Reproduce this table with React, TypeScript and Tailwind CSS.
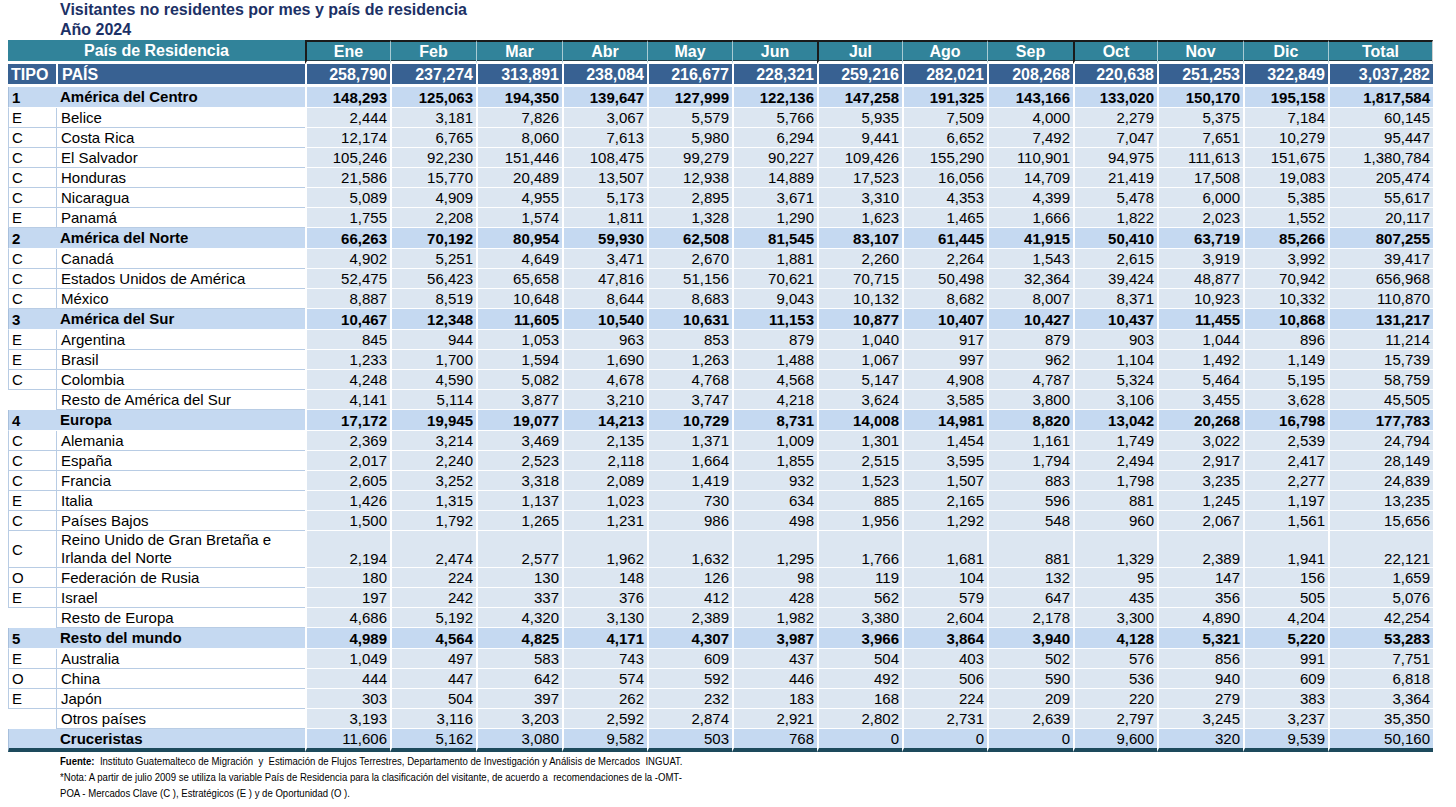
import React from 'react';

type RowKind = 'group' | 'item' | 'rest' | 'cruise';

interface Row {
  kind: RowKind;
  tipo: string;
  pais: string[];
  values: string;
  tall?: boolean;
}

const months = ['Ene', 'Feb', 'Mar', 'Abr', 'May', 'Jun', 'Jul', 'Ago', 'Sep', 'Oct', 'Nov', 'Dic', 'Total'];
const colWidths = [85, 86, 86, 85, 85, 85, 85, 85, 86, 84, 86, 85, 105];
// month columns that start with a dark rule in the header
const darkLeft = [0, 6, 9];

const totals = '258,790 237,274 313,891 238,084 216,677 228,321 259,216 282,021 208,268 220,638 251,253 322,849 3,037,282';

const rows: Row[] = [
  { kind: 'group', tipo: '1', pais: ['América del Centro'], values: '148,293 125,063 194,350 139,647 127,999 122,136 147,258 191,325 143,166 133,020 150,170 195,158 1,817,584' },
  { kind: 'item', tipo: 'E', pais: ['Belice'], values: '2,444 3,181 7,826 3,067 5,579 5,766 5,935 7,509 4,000 2,279 5,375 7,184 60,145' },
  { kind: 'item', tipo: 'C', pais: ['Costa Rica'], values: '12,174 6,765 8,060 7,613 5,980 6,294 9,441 6,652 7,492 7,047 7,651 10,279 95,447' },
  { kind: 'item', tipo: 'C', pais: ['El Salvador'], values: '105,246 92,230 151,446 108,475 99,279 90,227 109,426 155,290 110,901 94,975 111,613 151,675 1,380,784' },
  { kind: 'item', tipo: 'C', pais: ['Honduras'], values: '21,586 15,770 20,489 13,507 12,938 14,889 17,523 16,056 14,709 21,419 17,508 19,083 205,474' },
  { kind: 'item', tipo: 'C', pais: ['Nicaragua'], values: '5,089 4,909 4,955 5,173 2,895 3,671 3,310 4,353 4,399 5,478 6,000 5,385 55,617' },
  { kind: 'item', tipo: 'E', pais: ['Panamá'], values: '1,755 2,208 1,574 1,811 1,328 1,290 1,623 1,465 1,666 1,822 2,023 1,552 20,117' },
  { kind: 'group', tipo: '2', pais: ['América del Norte'], values: '66,263 70,192 80,954 59,930 62,508 81,545 83,107 61,445 41,915 50,410 63,719 85,266 807,255' },
  { kind: 'item', tipo: 'C', pais: ['Canadá'], values: '4,902 5,251 4,649 3,471 2,670 1,881 2,260 2,264 1,543 2,615 3,919 3,992 39,417' },
  { kind: 'item', tipo: 'C', pais: ['Estados Unidos de América'], values: '52,475 56,423 65,658 47,816 51,156 70,621 70,715 50,498 32,364 39,424 48,877 70,942 656,968' },
  { kind: 'item', tipo: 'C', pais: ['México'], values: '8,887 8,519 10,648 8,644 8,683 9,043 10,132 8,682 8,007 8,371 10,923 10,332 110,870' },
  { kind: 'group', tipo: '3', pais: ['América del Sur'], values: '10,467 12,348 11,605 10,540 10,631 11,153 10,877 10,407 10,427 10,437 11,455 10,868 131,217' },
  { kind: 'item', tipo: 'E', pais: ['Argentina'], values: '845 944 1,053 963 853 879 1,040 917 879 903 1,044 896 11,214' },
  { kind: 'item', tipo: 'E', pais: ['Brasil'], values: '1,233 1,700 1,594 1,690 1,263 1,488 1,067 997 962 1,104 1,492 1,149 15,739' },
  { kind: 'item', tipo: 'C', pais: ['Colombia'], values: '4,248 4,590 5,082 4,678 4,768 4,568 5,147 4,908 4,787 5,324 5,464 5,195 58,759' },
  { kind: 'rest', tipo: '', pais: ['Resto de América del Sur'], values: '4,141 5,114 3,877 3,210 3,747 4,218 3,624 3,585 3,800 3,106 3,455 3,628 45,505' },
  { kind: 'group', tipo: '4', pais: ['Europa'], values: '17,172 19,945 19,077 14,213 10,729 8,731 14,008 14,981 8,820 13,042 20,268 16,798 177,783' },
  { kind: 'item', tipo: 'C', pais: ['Alemania'], values: '2,369 3,214 3,469 2,135 1,371 1,009 1,301 1,454 1,161 1,749 3,022 2,539 24,794' },
  { kind: 'item', tipo: 'C', pais: ['España'], values: '2,017 2,240 2,523 2,118 1,664 1,855 2,515 3,595 1,794 2,494 2,917 2,417 28,149' },
  { kind: 'item', tipo: 'C', pais: ['Francia'], values: '2,605 3,252 3,318 2,089 1,419 932 1,523 1,507 883 1,798 3,235 2,277 24,839' },
  { kind: 'item', tipo: 'E', pais: ['Italia'], values: '1,426 1,315 1,137 1,023 730 634 885 2,165 596 881 1,245 1,197 13,235' },
  { kind: 'item', tipo: 'C', pais: ['Países Bajos'], values: '1,500 1,792 1,265 1,231 986 498 1,956 1,292 548 960 2,067 1,561 15,656' },
  { kind: 'item', tipo: 'C', pais: ['Reino Unido de Gran Bretaña e', 'Irlanda del Norte'], values: '2,194 2,474 2,577 1,962 1,632 1,295 1,766 1,681 881 1,329 2,389 1,941 22,121', tall: true },
  { kind: 'item', tipo: 'O', pais: ['Federación de Rusia'], values: '180 224 130 148 126 98 119 104 132 95 147 156 1,659' },
  { kind: 'item', tipo: 'E', pais: ['Israel'], values: '197 242 337 376 412 428 562 579 647 435 356 505 5,076' },
  { kind: 'rest', tipo: '', pais: ['Resto de Europa'], values: '4,686 5,192 4,320 3,130 2,389 1,982 3,380 2,604 2,178 3,300 4,890 4,204 42,254' },
  { kind: 'group', tipo: '5', pais: ['Resto del mundo'], values: '4,989 4,564 4,825 4,171 4,307 3,987 3,966 3,864 3,940 4,128 5,321 5,220 53,283' },
  { kind: 'item', tipo: 'E', pais: ['Australia'], values: '1,049 497 583 743 609 437 504 403 502 576 856 991 7,751' },
  { kind: 'item', tipo: 'O', pais: ['China'], values: '444 447 642 574 592 446 492 506 590 536 940 609 6,818' },
  { kind: 'item', tipo: 'E', pais: ['Japón'], values: '303 504 397 262 232 183 168 224 209 220 279 383 3,364' },
  { kind: 'rest', tipo: '', pais: ['Otros países'], values: '3,193 3,116 3,203 2,592 2,874 2,921 2,802 2,731 2,639 2,797 3,245 3,237 35,350' },
  { kind: 'cruise', tipo: '', pais: ['Cruceristas'], values: '11,606 5,162 3,080 9,582 503 768 0 0 0 9,600 320 9,539 50,160' },
];

function cellClasses(kind: RowKind) {
  switch (kind) {
    case 'group':
      return {
        tipo: 'bg-[#c5d9f1] border-l border-b border-l-[#a7bfdc] border-b-white font-bold',
        pais: 'bg-[#c5d9f1] border-b border-b-white font-bold',
        num: 'bg-[#c5d9f1] border-l-2 border-b border-white font-bold',
      };
    case 'cruise':
      return {
        tipo: 'bg-[#c5d9f1] border-l border-b-4 border-l-[#a7bfdc] border-b-[#1d4a5c]',
        pais: 'bg-[#c5d9f1] border-b-4 border-b-[#1d4a5c] font-bold',
        num: 'bg-[#c5d9f1] border-l-2 border-b-4 border-l-white border-b-[#1d4a5c]',
      };
    case 'rest':
      return {
        tipo: 'bg-white border-b border-b-white',
        pais: 'bg-white border-l border-b border-[#b8cce4]',
        num: 'bg-[#dce6f1] border-l-2 border-b border-white',
      };
    default:
      return {
        tipo: 'bg-white border-l border-b border-[#b8cce4]',
        pais: 'bg-white border-l border-b border-[#b8cce4]',
        num: 'bg-[#dce6f1] border-l-2 border-b border-white',
      };
  }
}

function DataRow({ row }: { row: Row }) {
  const cls = cellClasses(row.kind);
  const height = row.tall
    ? 'h-[35px]'
    : row.kind === 'group'
      ? 'h-[21px]'
      : row.kind === 'cruise'
        ? 'h-[23px]'
        : 'h-[20px]';

  return (
    <tr className={height}>
      <td className={`pl-[3px] align-middle ${cls.tipo}`}>{row.tipo}</td>
      <td className={`pl-[4px] align-middle leading-[18px] ${cls.pais}`}>
        {row.pais.map((line) => (
          <div key={line}>{line}</div>
        ))}
      </td>
      {row.values.split(' ').map((v, i) => (
        <td key={i} className={`pr-[3px] text-right ${row.tall ? 'align-bottom' : 'align-middle'} ${cls.num}`}>
          {v}
        </td>
      ))}
    </tr>
  );
}

export default function App() {
  return (
    <div className="min-h-screen bg-white pl-[8px] font-['Liberation_Sans',Arial,sans-serif] text-black">
      <div className="pl-[52px] font-bold text-[16px] text-[#1c3166]">
        <div className="leading-[20px]">Visitantes no residentes por mes y país de residencia</div>
        <div className="leading-[20px]">Año 2024</div>
      </div>

      <table className="table-fixed border-separate border-spacing-0 w-[1425px] text-[15px] leading-[17px]">
        <colgroup>
          <col className="w-[48px]" />
          <col className="w-[249px]" />
          {colWidths.map((w, i) => (
            <col key={i} style={{ width: w }} />
          ))}
        </colgroup>
        <thead>
          <tr className="h-[24px] text-[16px] font-bold text-white">
            <th colSpan={2} className="bg-[#31839a] border-b-[3px] border-white text-center align-middle font-bold">
              País de Residencia
            </th>
            {months.map((m, i) => (
              <th
                key={m}
                className={`bg-[#31839a] border-t-2 border-t-[#1a1a1a] border-b-[3px] border-b-white text-center align-middle font-bold shadow-[inset_0_-1px_0_#23404a] ${
                  darkLeft.includes(i) ? 'border-l-2 border-l-[#1a1a1a]' : 'border-l border-l-[#a9cbd4]'
                } ${i === months.length - 1 ? 'border-r border-r-[#cfcfcf]' : ''}`}
              >
                {m}
              </th>
            ))}
          </tr>
          <tr className="h-[23px] text-[16px] font-bold text-white">
            <th className="bg-[#386192] border-b-[3px] border-white pl-[3px] text-left align-middle font-bold">TIPO</th>
            <th className="bg-[#386192] border-l-2 border-b-[3px] border-white pl-[4px] text-left align-middle font-bold">PAÍS</th>
            {totals.split(' ').map((t, i) => (
              <th key={i} className="bg-[#386192] border-l-2 border-b-[3px] border-white pr-[3px] text-right align-middle font-bold">
                {t}
              </th>
            ))}
          </tr>
        </thead>
        <tbody>
          {rows.map((row) => (
            <DataRow key={row.pais.join(' ')} row={row} />
          ))}
        </tbody>
      </table>

      <div className="pl-[52px] pt-[1px]">
        <div className="origin-left scale-x-[0.87] text-[11px] leading-[16px] whitespace-pre">
          <div>
            <span className="font-bold">Fuente:</span>
            {'  Instituto Guatemalteco de Migración  y  Estimación de Flujos Terrestres, Departamento de Investigación y Análisis de Mercados  INGUAT.'}
          </div>
          <div>*Nota: A partir de julio 2009 se utiliza la variable País de Residencia para la clasificación del visitante, de acuerdo a  recomendaciones de la -OMT-</div>
          <div>POA - Mercados Clave (C ), Estratégicos (E ) y de Oportunidad (O ).</div>
        </div>
      </div>
    </div>
  );
}
